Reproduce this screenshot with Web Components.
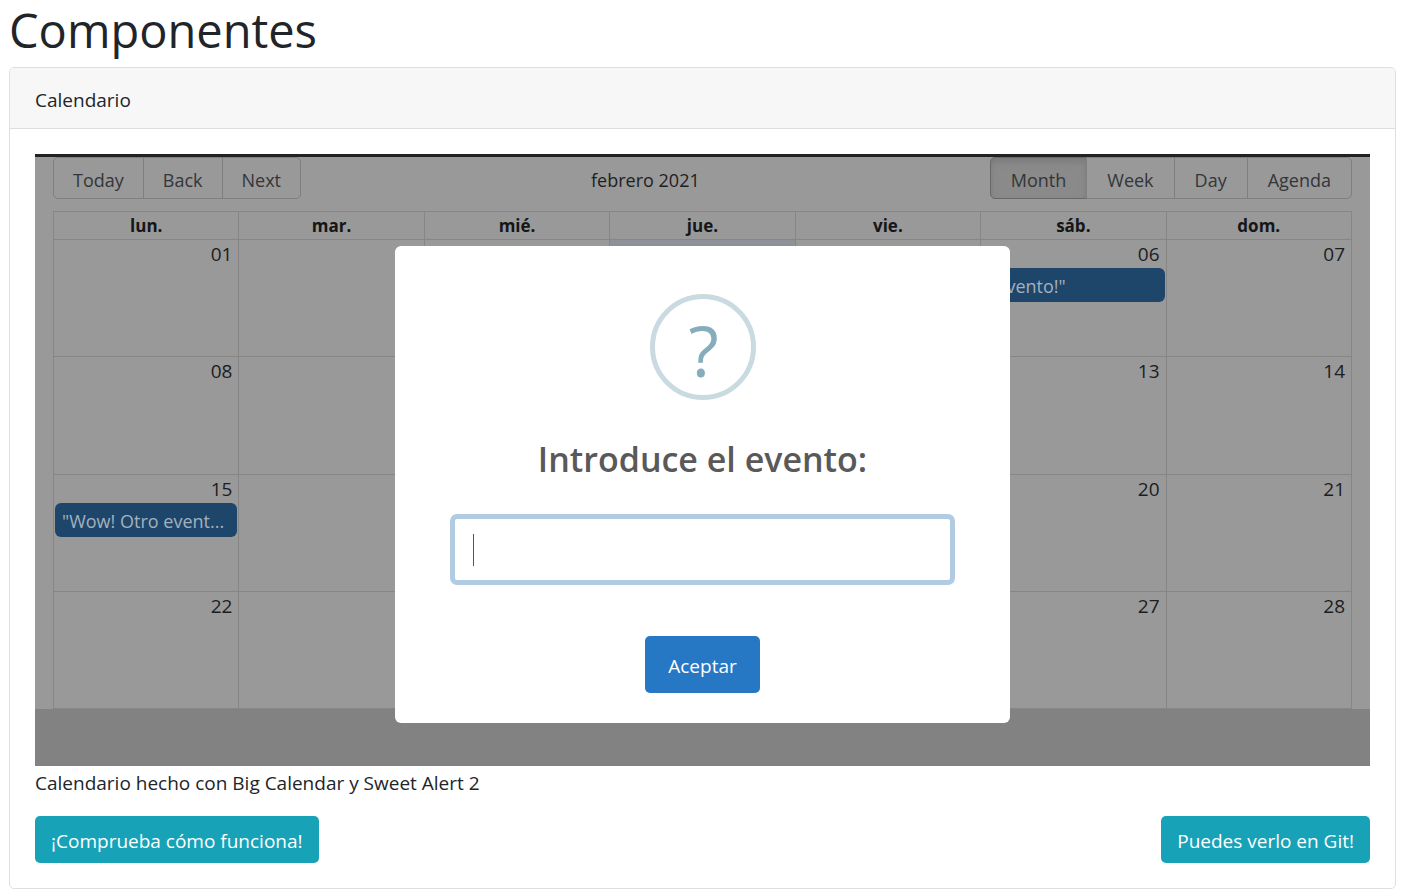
<!DOCTYPE html>
<html lang="es">
<head>
<meta charset="utf-8">
<title>Componentes</title>
<style>
  body {
    margin: 0;
    background: #fff;
    color: #212529;
    font: 19px/30px "Open Sans", "Noto Sans", sans-serif;
  }
</style>
</head>
<body>
<showcase-page>
  <showcase-card>
    <span slot="header">Calendario</span>
    <calendar-demo></calendar-demo>
    <span slot="caption">Calendario hecho con Big Calendar y Sweet Alert 2</span>
    <link-button slot="actions" href="#demo">¡Comprueba cómo funciona!</link-button>
    <link-button slot="actions" href="#git">Puedes verlo en Git!</link-button>
  </showcase-card>
</showcase-page>

<script>
  class BaseElement extends HTMLElement {
    connectedCallback() {
      if (!this.shadowRoot) {
        this.attachShadow({ mode: "open" }).innerHTML =
          "<style>*{box-sizing:border-box}</style>" + this.render();
      }
    }
  }

  customElements.define("showcase-page", class extends BaseElement {
    render() {
      return `<style>
        :host { display: block; padding: 0 23px 0 9px; }
        h1 { margin: 0 0 7px; font-size: 47px; line-height: 60px; font-weight: 400; }
      </style>
      <h1>Componentes</h1>
      <slot></slot>`;
    }
  });

  customElements.define("showcase-card", class extends BaseElement {
    render() {
      return `<style>
        :host { display: block; border: 1px solid #dfdfdf; border-radius: 5px; box-sizing: border-box; }
        header { padding: 17px 25px 13px; background: #f7f7f7; border-bottom: 1px solid #dfdfdf; border-radius: 4px 4px 0 0; }
        section { padding: 25px; }
        p { margin: 2px 0 18px; }
        footer { display: flex; justify-content: space-between; }
      </style>
      <header><slot name="header"></slot></header>
      <section>
        <slot></slot>
        <p><slot name="caption"></slot></p>
        <footer><slot name="actions"></slot></footer>
      </section>`;
    }
  });

  customElements.define("link-button", class extends BaseElement {
    render() {
      return `<style>
        :host { display: block; }
        a { display: block; padding: 10px 16px 7px; border-radius: 5px; background: #17a2b8; color: #fff; text-decoration: none; }
      </style>
      <a href="${this.getAttribute("href")}"><slot></slot></a>`;
    }
  });

  customElements.define("calendar-demo", class extends BaseElement {
    render() {
      return `<style>
        :host { display: block; position: relative; padding: 0 18px 57px; border-top: 3px solid #222224;
          background: linear-gradient(#828282, #828282) bottom / 100% 57px no-repeat #999; }
        .overlay { position: absolute; inset: 89px 0 auto; display: flex; justify-content: center; }
      </style>
      <calendar-toolbar></calendar-toolbar>
      <month-grid></month-grid>
      <div class="overlay"><event-dialog></event-dialog></div>`;
    }
  });

  customElements.define("calendar-toolbar", class extends BaseElement {
    render() {
      return `<style>
        :host { display: flex; justify-content: space-between; align-items: center; padding-bottom: 12px; font-size: 18px; }
        .group { display: flex; }
        button { height: 42px; margin: 0 0 0 -1px; padding: 4px 19px 0; border: 1px solid #7f7f7f; background: none; color: #333638; font: inherit; }
        .views button { padding: 4px 20px 0; }
        button:first-child { margin-left: 0; border-radius: 5px 0 0 5px; }
        button:last-child { border-radius: 0 5px 5px 0; }
        button[aria-pressed] { background: #8a8a8a; border-color: #686868; box-shadow: inset 0 4px 6px #7b7b7b; }
        .label { padding-top: 4px; color: #1d1f21; }
      </style>
      <div class="group"><button>Today</button><button>Back</button><button>Next</button></div>
      <span class="label">febrero 2021</span>
      <div class="group views"><button aria-pressed="true">Month</button><button>Week</button><button>Day</button><button>Agenda</button></div>`;
    }
  });

  customElements.define("month-grid", class extends BaseElement {
    render() {
      const names = ["lun.", "mar.", "mié.", "jue.", "vie.", "sáb.", "dom."];
      const events = { 6: '"evento!"', 15: '"Wow! Otro event...' };
      const today = 4;
      // Tuesday to Friday lie behind the open dialog, so their cells stay empty.
      const covered = d => d % 7 >= 2 && d % 7 <= 5;
      const cell = d => `<td${d === today ? ' class="today"' : ""}>${
        covered(d) ? "" : `<div class="day">${String(d).padStart(2, "0")}</div>`}${
        events[d] ? `<div class="event">${events[d]}</div>` : ""}</td>`;
      const rows = [0, 7, 14, 21].map(w => `<tr>${names.map((_, i) => cell(w + i + 1)).join("")}</tr>`).join("");
      return `<style>
        :host { display: block; }
        table { width: 100%; height: 498px; table-layout: fixed; border-collapse: collapse; color: #1b1d1f; }
        th, td { padding: 0; border: 1px solid #868686; }
        th { height: 27px; padding-top: 1px; font-size: 17px; line-height: 26px; color: #141617; }
        td { height: 117px; vertical-align: top; }
        .today { background: #8c9297; }
        .day { padding: 1px 6px 0 0; line-height: 27px; text-align: right; }
        .event { margin: 0 1px; padding: 3px 7px 1px; border-radius: 6px; background: #1e466a; color: #a3b1be;
          font-size: 18px; overflow: hidden; text-overflow: ellipsis; white-space: nowrap; }
      </style>
      <table>
        <thead><tr>${names.map(n => `<th scope="col">${n}</th>`).join("")}</tr></thead>
        <tbody>${rows}</tbody>
      </table>`;
    }
  });

  customElements.define("event-dialog", class extends BaseElement {
    render() {
      return `<style>
        :host { display: block; width: 46%; box-sizing: border-box; padding: 48px 55px 30px; border-radius: 6px; background: #fff; text-align: center; }
        .icon { width: 106px; height: 106px; margin: 0 auto 35px; padding: 3px 0 0 2px;
          border: 5px solid #c9dae1; border-radius: 50%; color: #87adbd; font-size: 70px; line-height: 96px; }
        label { display: block; margin-bottom: 31px; color: #595959; font-size: 34px; line-height: 48px; font-weight: 600; }
        input { display: block; width: 100%; height: 71px; margin: 0 0 51px; padding: 0 18px; border: 5px solid #b1cbe2; border-radius: 7px; outline: 0;
          background: linear-gradient(#545454, #545454) 18px 50% / 1px 32px no-repeat #fff; font: inherit; }
        button { display: block; height: 57px; margin: 0 auto; padding: 2px 23px 0; border: 0; border-radius: 5px; background: #2778c4; color: #fff; font: inherit; }
      </style>
      <div class="icon">?</div>
      <label for="event">Introduce el evento:</label>
      <input id="event" type="text">
      <button>Aceptar</button>`;
    }
  });
</script>
</body>
</html>
